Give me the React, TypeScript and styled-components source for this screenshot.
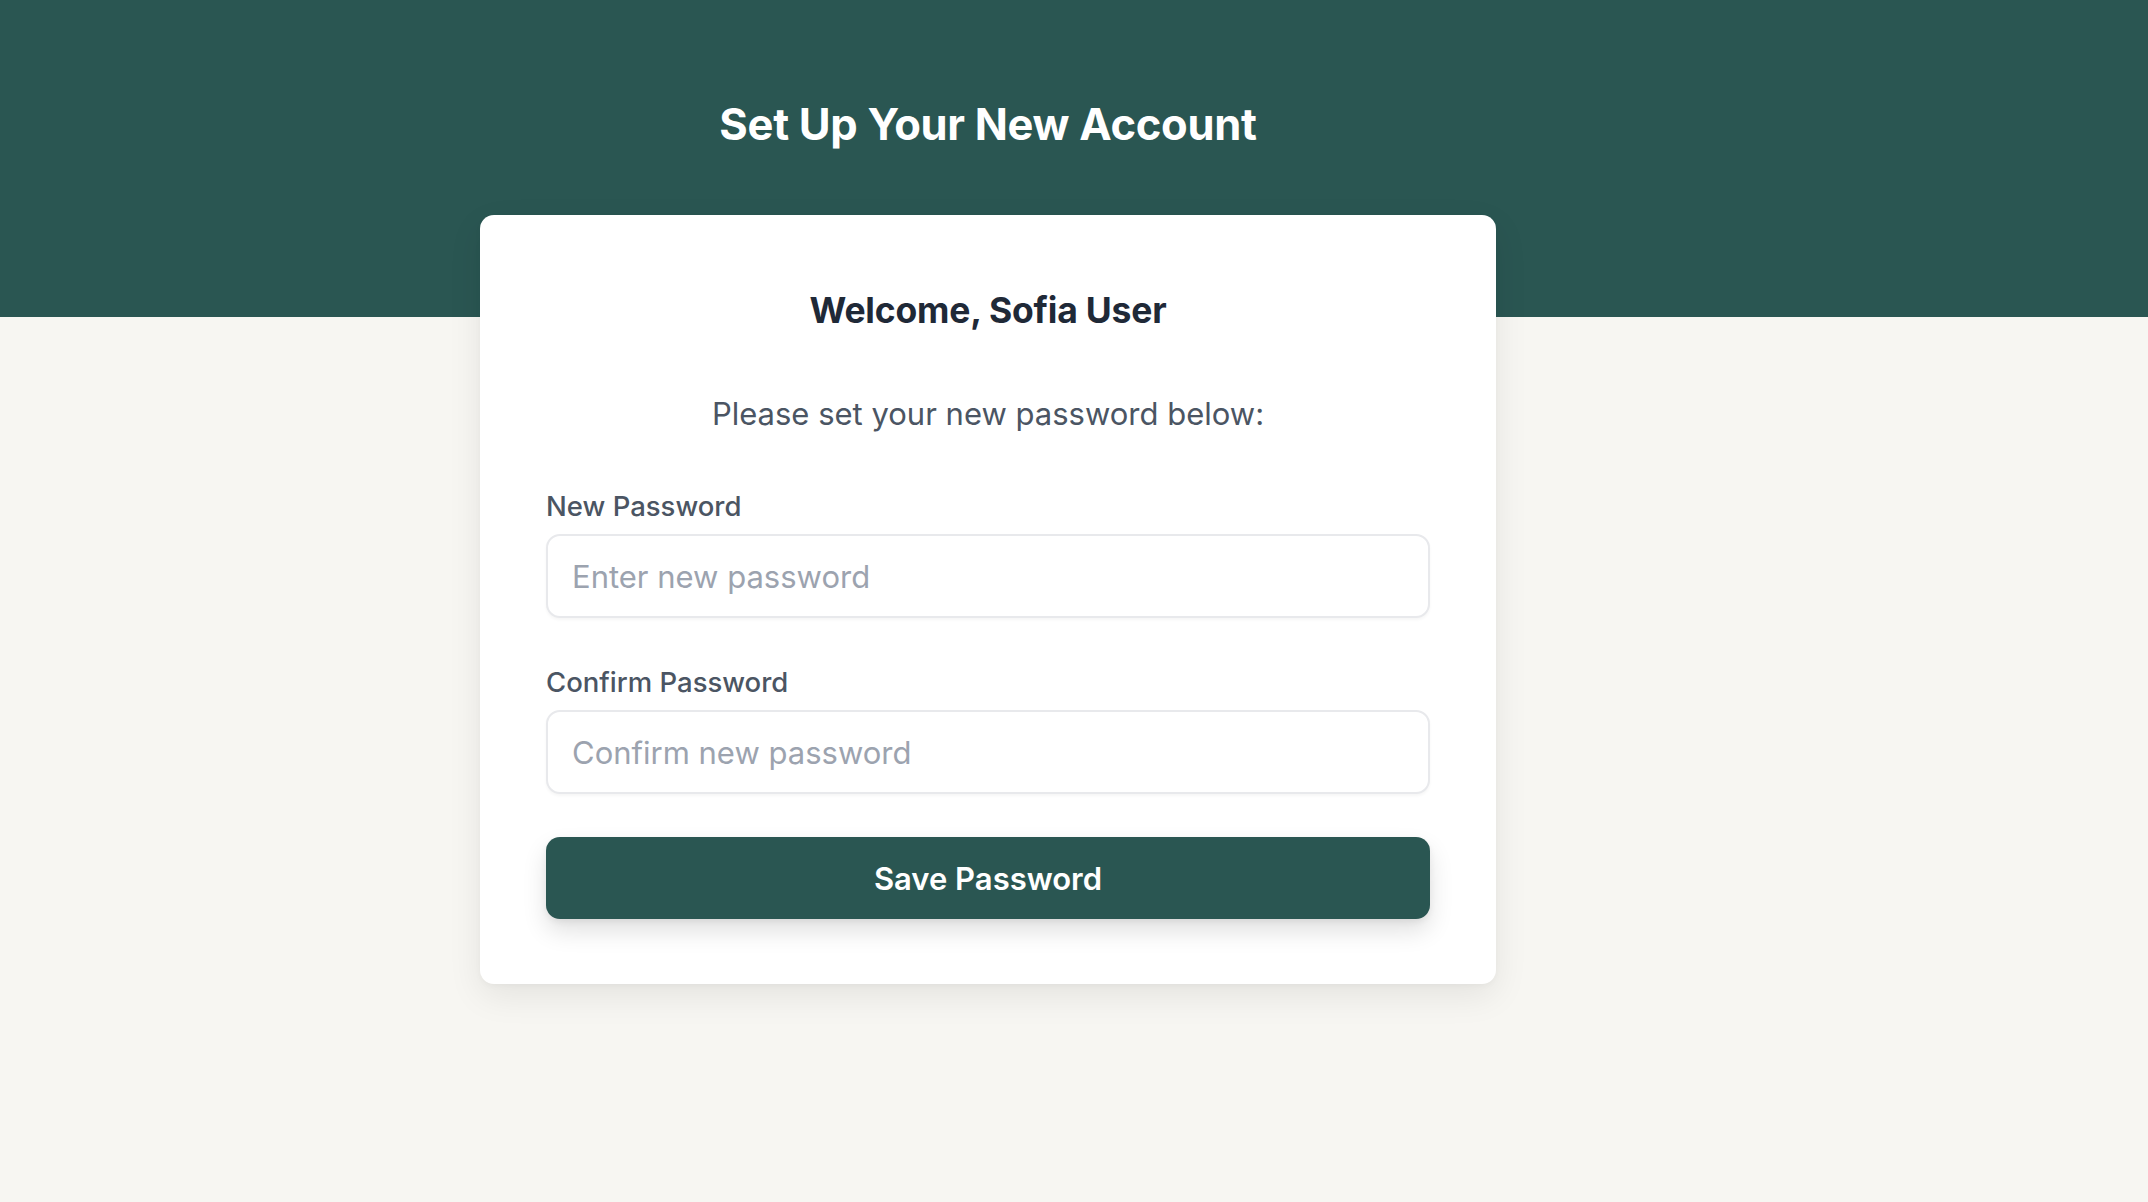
import styled, { createGlobalStyle } from "styled-components";

import type { FC } from "react";

const GlobalStyle = createGlobalStyle`
  html, body {
    margin: 0;
    padding: 0;
    background-color: #f7f6f2;
    font-family: Inter, "Noto Sans", "Liberation Sans", sans-serif;
  }

  * {
    box-sizing: border-box;
  }
`;

type FieldProps = {
  id: string;
  label: string;
  placeholder: string;
  first?: boolean;
};

const Field: FC<FieldProps> = ({ id, label, placeholder, first }) => {
  return (
    <FieldWrapper $first={first}>
      <Label htmlFor={id}>{label}</Label>
      <Input id={id} type="password" placeholder={placeholder} />
    </FieldWrapper>
  );
};

const App: FC = () => {
  return (
    <>
      <GlobalStyle />
      <Page>
        <Hero>
          <Title>Set Up Your New Account</Title>
        </Hero>
        <Card>
          <Welcome>Welcome, Sofia User</Welcome>
          <Description>Please set your new password below:</Description>
          <Form onSubmit={(e) => e.preventDefault()}>
            <Field
              id="new-password"
              label="New Password"
              placeholder="Enter new password"
              first
            />
            <Field
              id="confirm-password"
              label="Confirm Password"
              placeholder="Confirm new password"
            />
            <SaveButton type="submit">Save Password</SaveButton>
          </Form>
        </Card>
      </Page>
    </>
  );
};

export default App;

const Page = styled.div`
  min-height: 1202px;
  display: flex;
  flex-direction: column;
`;

const Hero = styled.header`
  height: 317px;
  padding: 98px 652px 0 480px;
  background-color: #2a5652;
`;

const Title = styled.h1`
  width: 1016px;
  margin: 0;
  font-size: 43.5px;
  line-height: 53px;
  font-weight: 700;
  letter-spacing: -0.3px;
  text-align: center;
  color: #ffffff;
`;

const Card = styled.main`
  width: 1016px;
  margin: -102px 0 0 480px;
  padding: 75px 66px 65px;
  background-color: #ffffff;
  border-radius: 14px;
  box-shadow: 0 12px 34px rgba(0, 0, 0, 0.08), 0 2px 6px rgba(0, 0, 0, 0.03);
`;

const Welcome = styled.h2`
  margin: 0;
  font-size: 35.5px;
  line-height: 42px;
  font-weight: 700;
  letter-spacing: -0.2px;
  text-align: center;
  color: #1f2937;
`;

const Description = styled.p`
  margin: 62px 0 0;
  font-size: 31px;
  line-height: 40px;
  font-weight: 400;
  text-align: center;
  color: #4b5563;
`;

const Form = styled.form`
  display: flex;
  flex-direction: column;
`;

const FieldWrapper = styled.div<{ $first?: boolean }>`
  display: flex;
  flex-direction: column;
  gap: 10px;
  margin-top: ${({ $first }) => ($first ? "54px" : "46px")};
`;

const Label = styled.label`
  font-size: 27.5px;
  line-height: 36px;
  font-weight: 500;
  color: #4b5563;
`;

const Input = styled.input`
  height: 84px;
  padding: 0 24px;
  border: 2px solid #e8e9ec;
  border-radius: 14px;
  background-color: #ffffff;
  box-shadow: 0 2px 3px rgba(0, 0, 0, 0.04);
  font-family: inherit;
  font-size: 31px;
  color: #111827;
  outline: none;

  &::placeholder {
    color: #9ca3af;
  }
`;

const SaveButton = styled.button`
  height: 82px;
  margin-top: 43px;
  border: none;
  border-radius: 14px;
  background-color: #2a5652;
  box-shadow: 0 12px 24px rgba(0, 0, 0, 0.12), 0 3px 6px rgba(0, 0, 0, 0.06);
  font-family: inherit;
  font-size: 31px;
  font-weight: 600;
  color: #ffffff;
  cursor: pointer;
`;
